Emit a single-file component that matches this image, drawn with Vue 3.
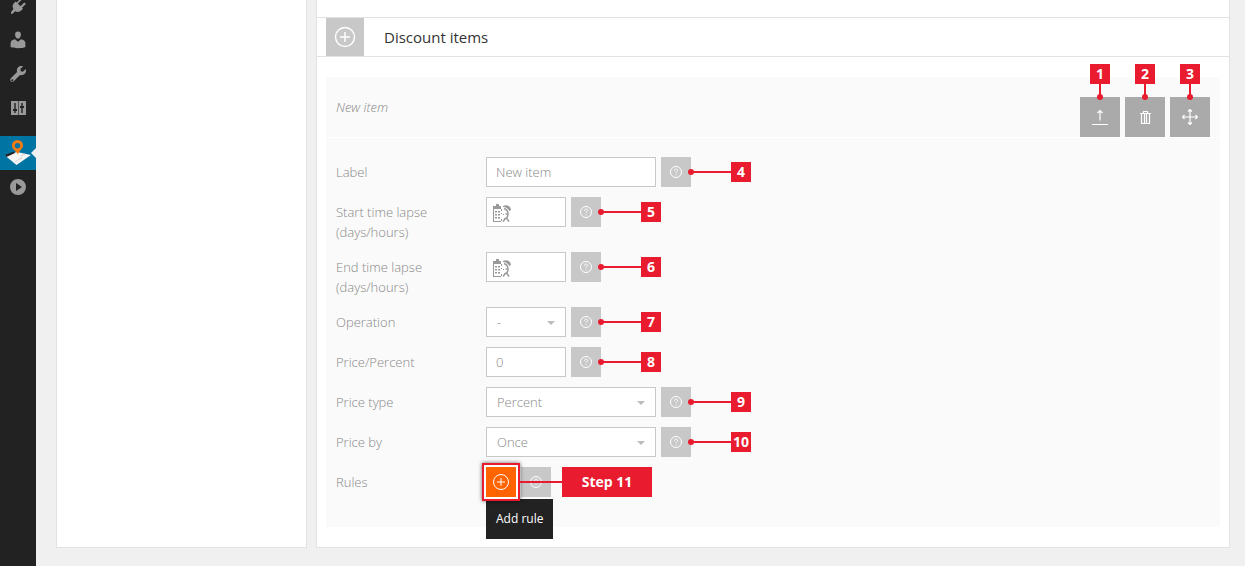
<script setup>
import { ref } from 'vue'

const fields = ref([
  { id: 'label', label: 'Label', kind: 'text', wide: true, value: 'New item', step: 4 },
  { id: 'start', label: 'Start time lapse', note: '(days/hours)', kind: 'time', value: '', step: 5 },
  { id: 'end', label: 'End time lapse', note: '(days/hours)', kind: 'time', value: '', step: 6 },
  { id: 'operation', label: 'Operation', kind: 'select', value: '-', options: ['-', '+'], step: 7 },
  { id: 'price', label: 'Price/Percent', kind: 'text', value: '0', step: 8 },
  { id: 'type', label: 'Price type', kind: 'select', wide: true, value: 'Percent', options: ['Percent', 'Price'], step: 9 },
  { id: 'by', label: 'Price by', kind: 'select', wide: true, value: 'Once', options: ['Once', 'Day', 'Hour'], step: 10 },
])
</script>

<template>
  <div class="page">
    <nav class="rail" aria-label="Admin menu">
      <a href="#" class="rail-item" aria-label="Plugins">
        <svg viewBox="0 0 20 20"><path d="M13.1 4.4 9.800 7.600l2.700 2.700 3.200-3.300c.5-.5 1.200-.5 1.600 0s.4 1.200 0 1.600L14 11.800l1 1-1.800 1.800c-1.500 1.500-4 1.800-6 .6l-2.700 2.600H3v-1.600L5.400 13c-1.200-2-1-4.300.7-6l1.600-1.600 1 1L12 3.200c.4-.5 1.100-.5 1.500 0s.1.800-.4 1.200z" /></svg>
      </a>
      <a href="#" class="rail-item" aria-label="Users">
        <svg viewBox="0 0 20 20"><path d="M10 8.700c-1.600 0-2.900-1.700-2.900-3.900C7.100 2.600 8 1.500 10 1.500s2.900 1.100 2.900 3.300c0 2.200-1.300 3.900-2.900 3.900zM7 9.300l3 2.400 3-2.400c2.700.2 4.400 1.600 4.400 4.200V17c-1.500.8-4.200 1.200-7.400 1.200S4 17.800 2.600 17v-3.500c0-2.600 1.700-4 4.400-4.200z" /></svg>
      </a>
      <a href="#" class="rail-item" aria-label="Tools">
        <svg viewBox="0 0 20 20"><path d="M16.700 9.800c-1.300 1.300-3.100 1.700-4.700 1.100l-6.200 6.300c-.8.800-2.200.8-3 0s-.8-2.200 0-3L9.100 8c-.6-1.600-.2-3.500 1.100-4.700 1.300-1.300 3.300-1.700 4.900-1L12.300 5.100l.5 2.100 2.100.6L17.700 5c.7 1.600.3 3.500-1 4.800zM5.200 16.700a1 1 0 1 0-1.900-.8 1 1 0 0 0 1.900.8z" /></svg>
      </a>
      <a href="#" class="rail-item" aria-label="Settings">
        <svg viewBox="0 0 20 20"><path fill-rule="evenodd" d="M3 3h15v14H3zM6.300 5v6H5v2h1.300v2h1.400v-2H9v-2H7.700V5zM13.300 5v3H12v2h1.300v5h1.400v-5H16V8h-1.300V5zM10.200 3v14h.6V3z" /></svg>
      </a>
      <a href="#" class="rail-item current" aria-label="Bookings">
        <svg class="map" viewBox="0 0 26 26">
          <path class="paper" d="M0 15.500 12 12l14 3-14.500 10z" />
          <path class="stripe" d="m0 15 9-3.500 1 1.500-8.500 4z" />
          <path class="fold" d="m10 22 6-4M15 19l2-1M20 14l-4 2" />
          <path class="pin" fill-rule="evenodd" d="M12.500 0A5.500 5.500 0 0 1 18 5.500c0 3.500-4 5-5 9-2-3.500-6-5.500-6-9A5.500 5.500 0 0 1 12.500 0zm0 3a2.700 2.700 0 1 0 0 5.400 2.700 2.700 0 0 0 0-5.400z" />
        </svg>
      </a>
      <a href="#" class="rail-item last" aria-label="Collapse menu">
        <svg viewBox="0 0 20 20"><path fill-rule="evenodd" d="M10 2a8 8 0 1 1 0 16 8 8 0 0 1 0-16zM8 6v8l6-4z" /></svg>
      </a>
    </nav>

    <main class="content">
      <aside class="card"></aside>
      <section class="card main-card">
        <header class="section-head">
          <button type="button" class="add" aria-label="Add discount item">
            <svg viewBox="0 0 24 24"><circle cx="12" cy="12" r="9.500" /><path d="M12 7v10M7 12h10" /></svg>
          </button>
          <h2>Discount items</h2>
        </header>

        <div class="item">
          <div class="item-head">
            <em>New item</em>
            <div class="actions">
              <button type="button" class="action" aria-label="Collapse item">
                <svg viewBox="0 0 16 16"><path d="M8 11.500V1.500M5.500 4 8 1.500 10.500 4M0 15.500h16" /></svg>
                <span class="callout above">1</span>
              </button>
              <button type="button" class="action" aria-label="Delete item">
                <svg viewBox="0 0 16 16"><path d="M3 4.500h11M6.500 4V2.500h4V4M4.500 5v9.500h8V5M7.500 5v9M9.500 5v9" /></svg>
                <span class="callout above">2</span>
              </button>
              <button type="button" class="action" aria-label="Move item">
                <svg viewBox="0 0 16 16"><path d="M8 .5v15M.5 8h15M6 2.500l2-2 2 2M6 13.500l2 2 2-2M2.500 6l-2 2 2 2M13.500 6l2 2-2 2" /></svg>
                <span class="callout above">3</span>
              </button>
            </div>
          </div>

          <form class="form" @submit.prevent>
            <div v-for="f in fields" :key="f.id" class="row">
              <label :for="f.id">{{ f.label }}<template v-if="f.note"><br />{{ f.note }}</template></label>
              <div class="control" :class="{ wide: f.wide }">
                <select v-if="f.kind === 'select'" :id="f.id" v-model="f.value">
                  <option v-for="o in f.options" :key="o">{{ o }}</option>
                </select>
                <input v-else :id="f.id" v-model="f.value" type="text" />
                <svg v-if="f.kind === 'select'" class="arrow" viewBox="0 0 8 4"><path d="M0 0h8L4 4z" /></svg>
                <svg v-if="f.kind === 'time'" class="clock" viewBox="0 0 20 20">
                  <path d="M1 2h3V0h3v2h2v3H1zM1 5h1v12h7v1H1z" />
                  <path d="M3 7h2v1.500H3zM6 7h2v1.500H6zM3 10h2v1.500H3zM6 10h2v1.500H6zM3 13h2v1.500H3zM6 13h2v1.500H6zM9 5h1v2H9zM9 9h1v1H9zM9 15h1v2H9zM11 10h1v1h-1z" />
                  <path d="M11 2c4-2 7.500 0 8 4l-1.500 1C16 5 14.500 3 11 3z" />
                  <path class="stroke" d="M12 4.500c3 1 4 3 4 5.500s-1 4.500-4 5M14.500 14l2.500 3.500M13 15l-2 2.500M13.500 10h1.500" />
                </svg>
              </div>
              <button type="button" class="help" :aria-label="`Help: ${f.label}`">
                <svg viewBox="0 0 14 14"><circle cx="7" cy="7" r="5.500" /><path d="M5.500 5.800C5.500 3.500 8.800 3.700 8.600 5.500 8.500 6.600 7 6.600 7 8M7 9.200v1" /></svg>
                <span class="callout beside">{{ f.step }}</span>
              </button>
            </div>

            <div class="row">
              <span class="row-label">Rules</span>
              <div class="rule">
                <button type="button" class="add-rule" aria-describedby="rule-tip" aria-label="Add rule">
                  <svg viewBox="0 0 18 18"><circle cx="9" cy="9" r="7.500" /><path d="M9 5v8M5 9h8" /></svg>
                </button>
                <span id="rule-tip" class="tip" role="tooltip">Add rule</span>
                <span class="halo"></span>
                <span class="step">Step 11</span>
              </div>
              <button type="button" class="help" aria-label="Help: Rules">
                <svg viewBox="0 0 14 14"><circle cx="7" cy="7" r="5.500" /><path d="M5.500 5.800C5.500 3.500 8.800 3.700 8.600 5.500 8.500 6.600 7 6.600 7 8M7 9.200v1" /></svg>
              </button>
            </div>
          </form>
        </div>
      </section>
    </main>
  </div>
</template>

<style>
body {
  background: #f0f0f0;
}
</style>

<style scoped>
* {
  box-sizing: border-box;
}
.page {
  display: flex;
  min-height: 100vh;
  overflow: hidden;
  color: #888;
  font: 300 13px/20px "Open Sans", "Noto Sans", sans-serif;
}
button,
input,
select {
  margin: 0;
  border: 0;
  border-radius: 0;
  font: inherit;
  color: inherit;
}
button {
  display: grid;
  place-items: center;
  padding: 0;
}
svg {
  display: block;
}
button svg {
  fill: none;
  stroke: #fff;
  stroke-width: 1;
}
.rail {
  flex: none;
  width: 36px;
  margin-top: -11px;
  background: #222;
}
.rail-item {
  position: relative;
  display: grid;
  place-items: center;
  height: 34px;
}
.rail-item svg {
  width: 20px;
  height: 20px;
  fill: #999;
}
.rail-item.current {
  margin-top: 11px;
  background: #0074a2;
}
.current::after {
  content: "";
  position: absolute;
  right: 0;
  border: 5px solid transparent;
  border-left: 0;
  border-right-color: #f0f0f0;
}
.rail-item .map {
  width: 26px;
  height: 26px;
}
.map .paper {
  fill: #f6f6f6;
}
.map .stripe {
  fill: #222;
}
.map .fold {
  fill: none;
  stroke: #d4d4d4;
}
.map .pin {
  fill: #f57c14;
}
.content {
  flex: 1;
  display: grid;
  grid-template-columns: 251px minmax(0, 1fr);
  gap: 9px;
  align-self: flex-start;
  padding: 0 15px 18px 20px;
}
.card {
  border: 1px solid #e2e2e2;
  border-top: 0;
  background: #fff;
}
.main-card {
  padding: 17px 0 20px;
}
.section-head {
  display: flex;
  align-items: center;
  gap: 20px;
  padding-left: 9px;
  border: solid #e2e2e2;
  border-width: 1px 0;
}
.add {
  width: 38px;
  height: 38px;
  background: #c8c8c8;
}
.add svg {
  width: 24px;
  height: 24px;
  stroke-width: 1.4;
}
h2 {
  margin: 0;
  color: #333;
  font-size: 15px;
  font-weight: 400;
}
.item {
  margin: 20px 9px 0;
  background: #fafafa;
}
.item-head {
  display: flex;
  align-items: center;
  justify-content: space-between;
  height: 61px;
  padding: 0 10px;
  border-bottom: 1px solid #fff;
}
.actions {
  display: flex;
  align-self: flex-end;
  gap: 5px;
}
.action {
  position: relative;
  width: 40px;
  height: 40px;
  background: #aaa;
}
.action svg {
  width: 16px;
  height: 16px;
  stroke-width: 1.2;
}
.form {
  display: grid;
  gap: 10px;
  padding: 19px 10px 30px;
}
.row {
  display: flex;
  align-items: flex-start;
  gap: 5px;
}
.row label,
.row-label {
  width: 145px;
  padding-top: 5px;
}
.control {
  position: relative;
  width: 80px;
}
.control.wide {
  width: 170px;
}
input,
select {
  display: block;
  width: 100%;
  height: 30px;
  padding: 0 9px;
  border: 1px solid #c8c8c8;
  background: #fff;
}
select {
  appearance: none;
  padding: 0 10px;
}
.arrow {
  position: absolute;
  top: 14px;
  right: 11px;
  width: 8px;
  height: 4px;
  fill: #bbb;
  pointer-events: none;
}
.clock {
  position: absolute;
  top: 7px;
  left: 6px;
  width: 20px;
  height: 20px;
  fill: #999;
  pointer-events: none;
}
.clock .stroke {
  fill: none;
  stroke: #999;
  stroke-width: 1.5;
}
.help {
  position: relative;
  width: 30px;
  height: 30px;
  background: #c8c8c8;
}
.help svg {
  width: 14px;
  height: 14px;
}
.callout {
  position: absolute;
  width: 20px;
  height: 20px;
  background: #e81c2e;
  color: #fff;
  font-size: 14px;
  font-weight: 700;
  text-align: center;
}
.callout::before,
.callout::after {
  content: "";
  position: absolute;
  background: #e81c2e;
}
.callout::after {
  width: 6px;
  height: 6px;
  border-radius: 50%;
}
.above {
  top: -33px;
  left: 10px;
}
.above::before {
  top: 20px;
  left: 9px;
  width: 2px;
  height: 13px;
}
.above::after {
  top: 30px;
  left: 7px;
}
.beside {
  top: 5px;
  left: 70px;
}
.beside::before {
  top: 9px;
  right: 20px;
  width: 40px;
  height: 2px;
}
.beside::after {
  top: 7px;
  right: 57px;
}
.rule {
  position: relative;
  z-index: 1;
}
.add-rule {
  width: 30px;
  height: 30px;
  background: #ff6400;
}
.add-rule svg {
  width: 18px;
  height: 18px;
}
.halo {
  position: absolute;
  inset: -4px;
  border: 2px solid #e81c2e;
  box-shadow: inset 0 0 0 2px #fff, 0 0 4px #0009;
  pointer-events: none;
}
.tip {
  position: absolute;
  top: 32px;
  left: 0;
  padding: 10px;
  background: #222;
  color: #fff;
  font-size: 12px;
  font-weight: 400;
  white-space: nowrap;
}
.step {
  position: absolute;
  top: 0;
  left: 76px;
  width: 90px;
  background: #e81c2e;
  color: #fff;
  font-size: 14px;
  font-weight: 700;
  line-height: 30px;
  text-align: center;
}
.step::before {
  content: "";
  position: absolute;
  top: 14px;
  right: 100%;
  width: 42px;
  height: 2px;
  background: #e81c2e;
}
</style>
